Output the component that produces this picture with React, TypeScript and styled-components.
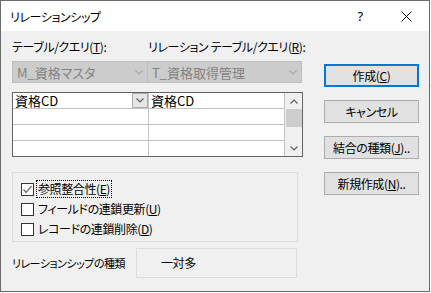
import React from "react";
import styled, { createGlobalStyle } from "styled-components";

const GlobalStyle = createGlobalStyle`
  html, body {
    margin: 0;
    padding: 0;
    background: #ffffff;
  }
  body {
    font-family: "Noto Sans CJK JP", "Noto Sans", sans-serif;
  }
`;

const Window = styled.div`
  box-sizing: border-box;
  width: 430px;
  height: 292px;
  border: 1px solid #6b6b6b;
  display: flex;
  flex-direction: column;
  background: #f0f0f0;
  font-family: "Noto Sans CJK JP", "Noto Sans", sans-serif;
  font-feature-settings: "palt";
  font-size: 12px;
  letter-spacing: -0.4px;
  color: #000000;
`;

const TitleBar = styled.div`
  height: 30px;
  flex: none;
  background: #ffffff;
  display: flex;
  align-items: center;
  padding-left: 9px;
`;

const TitleText = styled.span`
  flex: 1;
  font-size: 12px;
`;

const TitleButton = styled.div`
  width: 46px;
  height: 30px;
  display: flex;
  align-items: center;
  justify-content: center;
  font-family: "Noto Sans", sans-serif;
  font-size: 13px;
`;

const Body = styled.div`
  flex: 1;
  display: flex;
  gap: 21px;
  padding: 8px 0 0 11px;
`;

const LeftCol = styled.div`
  width: 291px;
  display: flex;
  flex-direction: column;
`;

const Labels = styled.div`
  display: grid;
  grid-template-columns: 136px 1fr;
  height: 16px;
  line-height: 16px;
  white-space: nowrap;
`;

const ComboRow = styled.div`
  display: grid;
  grid-template-columns: 136px 154px;
  margin-top: 6px;
`;

const Combo = styled.div<{ $first?: boolean }>`
  box-sizing: border-box;
  height: 22px;
  background: #cccccc;
  border: 1px solid #bfbfbf;
  border-left: ${(p) => (p.$first ? "1px solid #bfbfbf" : "none")};
  display: flex;
  align-items: center;
  padding: 0 4px 0 4px;
  color: #838383;
  font-size: 13px;
  letter-spacing: 0;
`;

const ComboText = styled.span`
  flex: 1;
`;

const Grid = styled.div`
  box-sizing: border-box;
  width: 291px;
  height: 65px;
  margin-top: 9px;
  border: 1px solid #646464;
  display: flex;
  background: #ffffff;
`;

const Cells = styled.div`
  display: grid;
  grid-template-columns: 136px 136px;
  grid-template-rows: 16px 16px 16px 15px;
`;

const Cell = styled.div<{ $last?: boolean }>`
  box-sizing: border-box;
  border-right: 1px solid #c4c4c4;
  border-bottom: ${(p) => (p.$last ? "none" : "1px solid #c4c4c4")};
  display: flex;
  align-items: center;
  padding-left: 2px;
  font-size: 13px;
  line-height: 15px;
  letter-spacing: 0;
  font-feature-settings: normal;
`;

const CellText = styled.span`
  flex: 1;
`;

const CellDrop = styled.div`
  box-sizing: border-box;
  width: 16px;
  height: 15px;
  background: #e6e6e6;
  border: 1px solid #adadad;
  display: flex;
  align-items: center;
  justify-content: center;
`;

const ScrollBar = styled.div`
  width: 17px;
  display: flex;
  flex-direction: column;
  background: #f0f0f0;
`;

const ScrollArrow = styled.div`
  height: 16px;
  display: flex;
  align-items: center;
  justify-content: center;
`;

const ScrollThumb = styled.div`
  height: 18px;
  margin-left: 1px;
  background: #cdcdcd;
`;

const ScrollTrack = styled.div`
  flex: 1;
`;

const Group = styled.div`
  box-sizing: border-box;
  width: 286px;
  height: 70px;
  margin-top: 15px;
  border: 1px solid #dcdcdc;
  padding: 6px 0 0 8px;
  display: flex;
  flex-direction: column;
`;

const CheckRow = styled.label`
  height: 20px;
  display: flex;
  align-items: center;
  gap: 2px;
  white-space: nowrap;
`;

const Box = styled.span`
  box-sizing: border-box;
  width: 13px;
  height: 13px;
  border: 1px solid #333333;
  background: #ffffff;
  display: flex;
  align-items: center;
  justify-content: center;
`;

const CheckLabel = styled.span<{ $focused?: boolean }>`
  padding: 0 1px;
  line-height: 16px;
  border: 1px dotted ${(p) => (p.$focused ? "#000000" : "transparent")};
`;

const TypeRow = styled.div`
  display: flex;
  align-items: center;
  margin-top: 6px;
`;

const TypeLabel = styled.span`
  width: 124px;
  font-size: 11px;
  letter-spacing: -0.5px;
  white-space: nowrap;
`;

const TypeBox = styled.div`
  box-sizing: border-box;
  width: 161px;
  height: 30px;
  border: 1px solid #dcdcdc;
  display: flex;
  align-items: center;
  padding-left: 24px;
  padding-bottom: 2px;
`;

const RightCol = styled.div`
  display: flex;
  flex-direction: column;
  gap: 13px;
  padding-top: 25px;
`;

const Button = styled.button<{ $default?: boolean }>`
  box-sizing: border-box;
  width: 95px;
  height: 23px;
  margin: 0;
  padding: 0;
  background: #e1e1e1;
  border: ${(p) => (p.$default ? "2px solid #0078d7" : "1px solid #adadad")};
  font-family: inherit;
  font-feature-settings: "palt";
  font-size: 12px;
  letter-spacing: -0.4px;
  color: #000000;
  white-space: nowrap;
`;

const Chevron = ({ color, up }: { color: string; up?: boolean }) => (
  <svg width="8" height="5" viewBox="0 0 8 5">
    <polyline
      points={up ? "0.5,4.5 4,1 7.5,4.5" : "0.5,0.5 4,4 7.5,0.5"}
      fill="none"
      stroke={color}
      strokeWidth="1.2"
    />
  </svg>
);

const CloseIcon = () => (
  <svg width="11" height="11" viewBox="0 0 11 11">
    <path d="M0.5 0.5 L10.5 10.5 M10.5 0.5 L0.5 10.5" stroke="#000" strokeWidth="1" />
  </svg>
);

const CheckMark = () => (
  <svg width="11" height="11" viewBox="0 0 11 11">
    <polyline points="1.5,5.5 4,8.5 9.5,2" fill="none" stroke="#6d6d6d" strokeWidth="1.2" />
  </svg>
);

const Check = ({
  checked,
  focused,
  children,
}: {
  checked?: boolean;
  focused?: boolean;
  children: React.ReactNode;
}) => (
  <CheckRow>
    <Box>{checked && <CheckMark />}</Box>
    <CheckLabel $focused={focused}>{children}</CheckLabel>
  </CheckRow>
);

export default function App() {
  return (
    <>
      <GlobalStyle />
      <Window>
        <TitleBar>
          <TitleText>リレーションシップ</TitleText>
          <TitleButton>?</TitleButton>
          <TitleButton>
            <CloseIcon />
          </TitleButton>
        </TitleBar>
        <Body>
          <LeftCol>
            <Labels>
              <span>
                テーブル/クエリ(<u>T</u>):
              </span>
              <span>
                リレーション テーブル/クエリ(<u>R</u>):
              </span>
            </Labels>
            <ComboRow>
              <Combo $first>
                <ComboText>M_資格マスタ</ComboText>
                <Chevron color="#a8a8a8" />
              </Combo>
              <Combo>
                <ComboText>T_資格取得管理</ComboText>
                <Chevron color="#a8a8a8" />
              </Combo>
            </ComboRow>
            <Grid>
              <Cells>
                <Cell>
                  <CellText>資格CD</CellText>
                  <CellDrop>
                    <Chevron color="#606060" />
                  </CellDrop>
                </Cell>
                <Cell>
                  <CellText>資格CD</CellText>
                </Cell>
                <Cell />
                <Cell />
                <Cell />
                <Cell />
                <Cell $last />
                <Cell $last />
              </Cells>
              <ScrollBar>
                <ScrollArrow>
                  <Chevron color="#606060" up />
                </ScrollArrow>
                <ScrollThumb />
                <ScrollTrack />
                <ScrollArrow>
                  <Chevron color="#606060" />
                </ScrollArrow>
              </ScrollBar>
            </Grid>
            <Group>
              <Check checked focused>
                参照整合性(<u>E</u>)
              </Check>
              <Check>
                フィールドの連鎖更新(<u>U</u>)
              </Check>
              <Check>
                レコードの連鎖削除(<u>D</u>)
              </Check>
            </Group>
            <TypeRow>
              <TypeLabel>リレーションシップの種類</TypeLabel>
              <TypeBox>一対多</TypeBox>
            </TypeRow>
          </LeftCol>
          <RightCol>
            <Button $default>
              作成(<u>C</u>)
            </Button>
            <Button>キャンセル</Button>
            <Button>
              結合の種類(<u>J</u>)..
            </Button>
            <Button>
              新規作成(<u>N</u>)..
            </Button>
          </RightCol>
        </Body>
      </Window>
    </>
  );
}
